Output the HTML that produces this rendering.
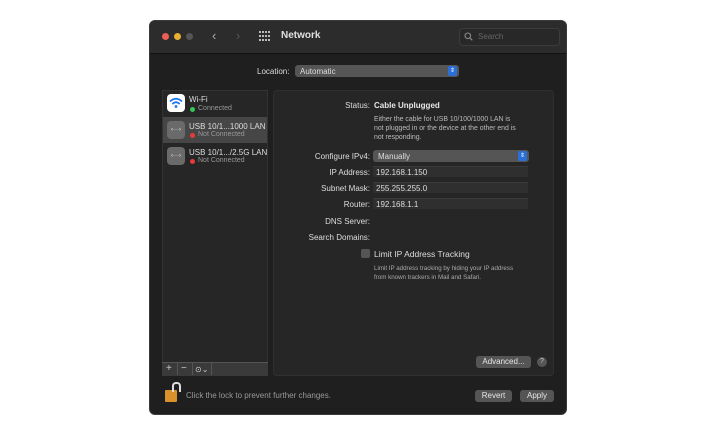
<!DOCTYPE html><html><head><style>
body{margin:0;width:711px;height:432px;background:#fff;position:relative;font-family:"Liberation Sans",sans-serif;overflow:hidden}
.a{position:absolute}
.t{position:absolute;color:#ddd;font-size:8px;white-space:nowrap}
.r{text-align:right}
.f{position:absolute;background:#2f2f2f;border-top:1px solid #3a3a3a;height:11px;left:373px;width:155px;color:#ddd;font-size:8px;line-height:11px;padding-left:3px;box-sizing:border-box}
.btn{position:absolute;background:#555;border-radius:3px;color:#e6e6e6;font-size:8px;text-align:center;line-height:12px;height:12px}
</style></head><body>
<div class="a" style="left:149px;top:20px;width:418px;height:395px;background:#1f1f1f;border-radius:6px;overflow:hidden;border:1px solid #3a3a3a;box-sizing:border-box">
<div class="a" style="left:0;top:0;width:418px;height:32px;background:#2c2c2c;border-bottom:1px solid #111"></div>
</div>
<div class="a" style="left:162px;top:33px;width:7px;height:7px;border-radius:50%;background:#ec5f55"></div>
<div class="a" style="left:174px;top:33px;width:7px;height:7px;border-radius:50%;background:#e6b132"></div>
<div class="a" style="left:186px;top:33px;width:7px;height:7px;border-radius:50%;background:#555"></div>
<div class="t" style="left:212px;top:28px;font-size:13px;color:#aaa">‹</div>
<div class="t" style="left:236px;top:28px;font-size:13px;color:#555">›</div>
<svg class="a" style="left:259px;top:31px" width="12" height="10"><g fill="#bbb"><rect x="0" y="0" width="2" height="2"/><rect x="3" y="0" width="2" height="2"/><rect x="6" y="0" width="2" height="2"/><rect x="9" y="0" width="2" height="2"/><rect x="0" y="4" width="2" height="2"/><rect x="3" y="4" width="2" height="2"/><rect x="6" y="4" width="2" height="2"/><rect x="9" y="4" width="2" height="2"/><rect x="0" y="8" width="2" height="2"/><rect x="3" y="8" width="2" height="2"/><rect x="6" y="8" width="2" height="2"/><rect x="9" y="8" width="2" height="2"/></g></svg>
<div class="t" style="left:281px;top:30px;font-size:10px;font-weight:bold;color:#e0e0e0">Network</div>
<div class="a" style="left:459px;top:28px;width:99px;height:16px;border:1px solid #3c3c3c;border-radius:4px;background:#282828"></div>
<svg class="a" style="left:464px;top:32px" width="9" height="9"><circle cx="3.8" cy="3.8" r="2.8" fill="none" stroke="#888" stroke-width="1.1"/><path d="M5.8 5.8L8.3 8.3" stroke="#888" stroke-width="1.2"/></svg>
<div class="t" style="left:478px;top:32px;color:#666">Search</div>
<div class="t" style="left:257px;top:67px">Location:</div>
<div class="a" style="left:295px;top:65px;width:164px;height:12px;background:#555;border-radius:3px"></div>
<div class="t" style="left:300px;top:67px">Automatic</div>
<div class="a" style="left:448px;top:66px;width:9px;height:10px;background:#2a6fd6;border-radius:2px;color:#fff;font-size:6px;text-align:center;line-height:10px">⇕</div>
<div class="a" style="left:162px;top:90px;width:106px;height:286px;background:#262626;border:1px solid #333;box-sizing:border-box"></div>
<div class="a" style="left:163px;top:117px;width:104px;height:26px;background:#464646"></div>
<div class="a" style="left:167px;top:94px;width:18px;height:18px;background:#fff;border-radius:4px"></div>
<svg class="a" style="left:169px;top:97px" width="14" height="12"><g fill="none" stroke="#1a73e8" stroke-width="1.6"><path d="M1 4.5Q7 -1 13 4.5"/><path d="M3.3 7Q7 3.5 10.7 7"/></g><circle cx="7" cy="9.5" r="1.4" fill="#1a73e8"/></svg>
<div class="t" style="left:189px;top:95px;font-size:8px">Wi-Fi</div>
<div class="a" style="left:190px;top:107px;width:5px;height:5px;border-radius:50%;background:#34c759"></div>
<div class="t" style="left:198px;top:105px;font-size:7px;color:#999">Connected</div>
<div class="a" style="left:167px;top:121px;width:18px;height:18px;background:#6a6a6a;border-radius:4px;color:#eee;font-size:6px;text-align:center;line-height:18px">‹···›</div>
<div class="t" style="left:189px;top:122px;font-size:8px">USB 10/1...1000 LAN</div>
<div class="a" style="left:190px;top:133px;width:5px;height:5px;border-radius:50%;background:#e53b3b"></div>
<div class="t" style="left:198px;top:131px;font-size:7px;color:#999">Not Connected</div>
<div class="a" style="left:167px;top:147px;width:18px;height:18px;background:#6a6a6a;border-radius:4px;color:#eee;font-size:6px;text-align:center;line-height:18px">‹···›</div>
<div class="t" style="left:189px;top:148px;font-size:8px">USB 10/1.../2.5G LAN</div>
<div class="a" style="left:190px;top:159px;width:5px;height:5px;border-radius:50%;background:#e53b3b"></div>
<div class="t" style="left:198px;top:157px;font-size:7px;color:#999">Not Connected</div>
<div class="a" style="left:162px;top:362px;width:106px;height:14px;background:#3a3a3a;border-top:1px solid #555;box-sizing:border-box"></div>
<div class="t" style="left:166px;top:363px;font-size:10px;color:#ccc">+</div>
<div class="a" style="left:177px;top:363px;width:1px;height:12px;background:#555"></div>
<div class="t" style="left:181px;top:363px;font-size:10px;color:#ccc">−</div>
<div class="a" style="left:192px;top:363px;width:1px;height:12px;background:#555"></div>
<div class="t" style="left:195px;top:365px;font-size:8px;color:#ccc">⊙⌄</div>
<div class="a" style="left:211px;top:363px;width:1px;height:12px;background:#555"></div>
<div class="a" style="left:273px;top:90px;width:281px;height:286px;background:#262626;border:1px solid #303030;border-radius:4px;box-sizing:border-box"></div>
<div class="t r" style="right:341px;top:101px">Status:</div>
<div class="t" style="left:374px;top:101px;font-weight:bold;color:#e6e6e6">Cable Unplugged</div>
<div class="t" style="left:374px;top:115px;font-size:6.9px;line-height:9px;color:#bbb">Either the cable for USB 10/100/1000 LAN is<br>not plugged in or the device at the other end is<br>not responding.</div>
<div class="t r" style="right:341px;top:152px">Configure IPv4:</div>
<div class="a" style="left:373px;top:150px;width:156px;height:12px;background:#555;border-radius:3px"></div>
<div class="t" style="left:378px;top:152px">Manually</div>
<div class="a" style="left:518px;top:151px;width:9px;height:10px;background:#2a6fd6;border-radius:2px;color:#fff;font-size:6px;text-align:center;line-height:10px">⇕</div>
<div class="t r" style="right:341px;top:168px">IP Address:</div><div class="f" style="top:166px">192.168.1.150</div>
<div class="t r" style="right:341px;top:184px">Subnet Mask:</div><div class="f" style="top:182px">255.255.255.0</div>
<div class="t r" style="right:341px;top:200px">Router:</div><div class="f" style="top:198px">192.168.1.1</div>
<div class="t r" style="right:341px;top:217px">DNS Server:</div>
<div class="t r" style="right:341px;top:233px">Search Domains:</div>
<div class="a" style="left:361px;top:249px;width:9px;height:9px;background:#555;border-radius:2px"></div>
<div class="t" style="left:374px;top:249px;font-size:8.5px">Limit IP Address Tracking</div>
<div class="t" style="left:374px;top:264px;font-size:6.2px;line-height:9px;color:#aaa">Limit IP address tracking by hiding your IP address<br>from known trackers in Mail and Safari.</div>
<div class="btn" style="left:476px;top:356px;width:55px">Advanced...</div>
<div class="a" style="left:537px;top:357px;width:10px;height:10px;border-radius:50%;background:#555;color:#ccc;font-size:7px;text-align:center;line-height:10px">?</div>
<div class="a" style="left:165px;top:390px;width:12px;height:12px;background:#d9922a;border-radius:1px"></div>
<div class="a" style="left:172px;top:382px;width:5px;height:8px;border:2px solid #ddd;border-bottom:none;border-radius:4px 4px 0 0"></div>
<div class="t" style="left:186px;top:391px;color:#999">Click the lock to prevent further changes.</div>
<div class="btn" style="left:475px;top:390px;width:37px">Revert</div>
<div class="btn" style="left:520px;top:390px;width:34px">Apply</div>
</body></html>
